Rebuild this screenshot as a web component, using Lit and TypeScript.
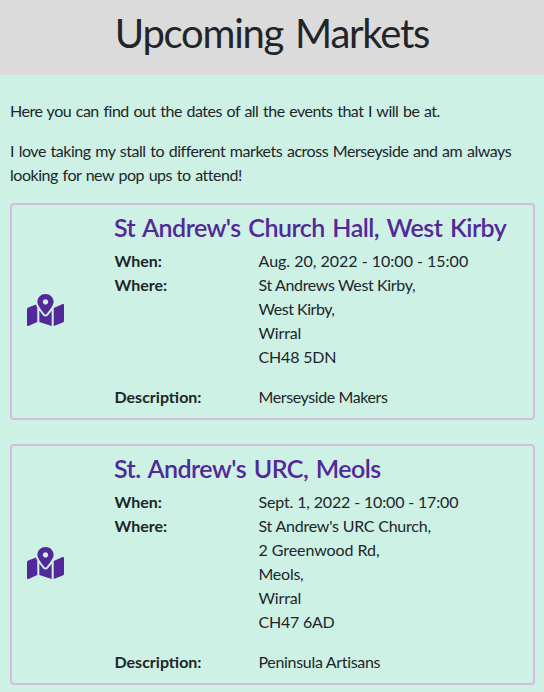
import { LitElement, html, css, svg } from "lit";

interface Line {
  text: string;
  tracking: number;
}

interface Market {
  name: Line;
  when: Line;
  where: Line[];
  description: Line;
}

const markets: Market[] = [
  {
    name: { text: "St Andrew's Church Hall, West Kirby", tracking: -0.53 },
    when: { text: "Aug. 20, 2022 - 10:00 - 15:00", tracking: 0 },
    where: [
      { text: "St Andrews West Kirby,", tracking: -0.36 },
      { text: "West Kirby,", tracking: -0.47 },
      { text: "Wirral", tracking: -0.18 },
      { text: "CH48 5DN", tracking: -0.17 },
    ],
    description: { text: "Merseyside Makers", tracking: -0.4 },
  },
  {
    name: { text: "St. Andrew's URC, Meols", tracking: -0.53 },
    when: { text: "Sept. 1, 2022 - 10:00 - 17:00", tracking: -0.15 },
    where: [
      { text: "St Andrew's URC Church,", tracking: -0.23 },
      { text: "2 Greenwood Rd,", tracking: -0.07 },
      { text: "Meols,", tracking: -0.244 },
      { text: "Wirral", tracking: -0.18 },
      { text: "CH47 6AD", tracking: -0.23 },
    ],
    description: { text: "Peninsula Artisans", tracking: -0.32 },
  },
];

const mapIcon = svg`<path fill="currentColor" d="M288 0c-69.59 0-126 56.41-126 126 0 56.26 82.35 158.8 113.9 196.02 6.39 7.54 17.82 7.54 24.2 0C331.65 284.8 414 182.26 414 126 414 56.41 357.59 0 288 0zm0 168c-23.2 0-42-18.8-42-42s18.8-42 42-42 42 18.8 42 42-18.8 42-42 42zM20.12 215.95A32.006 32.006 0 0 0 0 245.66v250.32c0 11.32 11.43 19.06 21.94 14.86L160 448V214.92c-8.84-15.98-16.07-31.54-21.25-46.42L20.12 215.95zM288 359.67c-14.07 0-27.38-6.18-36.51-16.96-19.66-23.2-40.57-49.62-59.49-76.72v182l192 64V266c-18.92 27.09-39.82 53.52-59.49 76.72-9.13 10.77-22.44 16.95-36.51 16.95zm266.06-198.51L416 224v288l139.88-55.95A31.996 31.996 0 0 0 576 426.34V176.02c0-11.32-11.43-19.06-21.94-14.86z"/>`;

const line = (l: Line) => html`<span style="letter-spacing:${l.tracking}px">${l.text}</span>`;

class MarketCard extends LitElement {
  static properties = { market: { attribute: false } };
  declare market: Market;

  static styles = css`
    :host {
      display: grid;
      grid-template-columns: 102px 1fr;
      align-items: center;
      box-sizing: border-box;
      border: 2px solid #d8b9e2;
      border-radius: 4px;
      padding: 8px 0 9px;
    }
    .icon {
      display: block;
      width: 37px;
      height: 32px;
      margin-left: 15px;
      margin-top: -3px;
      color: #53289a;
    }
    h2 {
      margin: 0 0 7px;
      font-size: 25px;
      line-height: 29px;
      font-weight: 600;
      word-spacing: 2px;
      white-space: nowrap;
      color: #53289a;
    }
    dl {
      display: grid;
      grid-template-columns: 144px 1fr;
      margin: 0 0 0 0.5px;
    }
    dt {
      font-weight: 700;
    }
    dd {
      margin: 0;
    }
    dd span {
      display: block;
    }
    .where {
      margin-bottom: 16px;
    }
  `;

  render() {
    const m = this.market;
    return html`
      <svg class="icon" viewBox="0 0 576 512" preserveAspectRatio="none">${mapIcon}</svg>
      <div>
        <h2>${line(m.name)}</h2>
        <dl>
          <dt>When:</dt>
          <dd>${line(m.when)}</dd>
          <dt>Where:</dt>
          <dd class="where">${m.where.map(line)}</dd>
          <dt>Description:</dt>
          <dd>${line(m.description)}</dd>
        </dl>
      </div>
    `;
  }
}
customElements.define("market-card", MarketCard);

class AppRoot extends LitElement {
  static styles = css`
    :host {
      display: block;
      min-height: 692px;
      background: #cdf1e5;
      color: #212529;
      font-family: Lato, "Noto Sans", sans-serif;
      font-size: 16px;
      line-height: 24px;
    }
    header {
      height: 75px;
      box-sizing: border-box;
      padding-top: 9px;
      background: #dbdbdb;
      text-align: center;
    }
    h1 {
      margin: 0;
      font-size: 40px;
      line-height: 48px;
      font-weight: 400;
      letter-spacing: -1.25px;
      word-spacing: 3px;
    }
    main {
      padding: 24px 9px 0 10px;
    }
    p {
      margin: 0 0 16px;
      word-spacing: 1px;
      letter-spacing: -0.49px;
    }
    .about {
      letter-spacing: -0.465px;
    }
    .list {
      display: grid;
      gap: 24px;
    }
  `;

  render() {
    return html`
      <header><h1>Upcoming Markets</h1></header>
      <main>
        <p>Here you can find out the dates of all the events that I will be at.</p>
        <p class="about">
          I love taking my stall to different markets across Merseyside and am always looking for new pop ups to attend!
        </p>
        <div class="list">
          ${markets.map((m) => html`<market-card .market=${m}></market-card>`)}
        </div>
      </main>
    `;
  }
}
customElements.define("app-root", AppRoot);
